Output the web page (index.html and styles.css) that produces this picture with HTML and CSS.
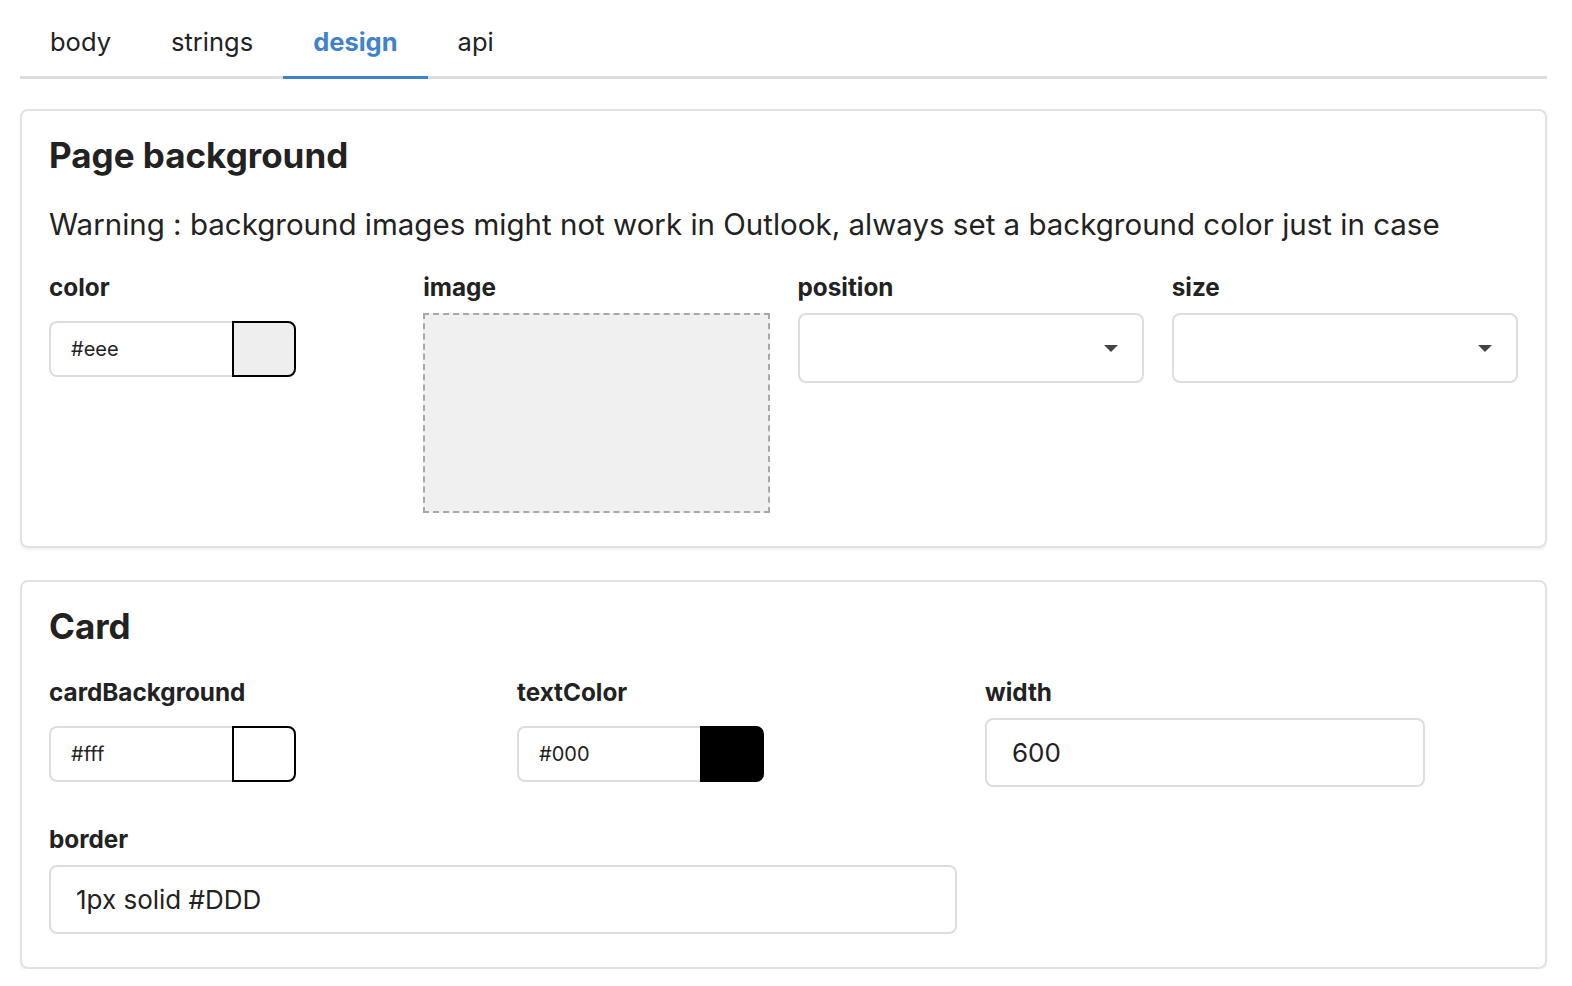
FILE: index.html
```html
<!DOCTYPE html>
<html lang="en">
<head>
<meta charset="utf-8">
<title>Design</title>
<link rel="stylesheet" href="styles.css">
</head>
<body>
<div class="page">
  <nav class="tabs">
    <div class="tab">body</div>
    <div class="tab">strings</div>
    <div class="tab active">design</div>
    <div class="tab">api</div>
  </nav>

  <section class="card">
    <h2 class="card-title">Page background</h2>
    <p class="warning">Warning : background images might not work in Outlook, always set a background color just in case</p>
    <div class="grid grid-4">
      <div class="field">
        <label class="label">color</label>
        <div class="color-input">
          <div class="color-text">#eee</div>
          <div class="swatch swatch-eee"></div>
        </div>
      </div>
      <div class="field">
        <label class="label">image</label>
        <div class="image-drop"></div>
      </div>
      <div class="field">
        <label class="label">position</label>
        <div class="select"><span class="caret"></span></div>
      </div>
      <div class="field">
        <label class="label">size</label>
        <div class="select"><span class="caret"></span></div>
      </div>
    </div>
  </section>

  <section class="card">
    <h2 class="card-title card-title-tight">Card</h2>
    <div class="grid grid-3">
      <div class="field">
        <label class="label">cardBackground</label>
        <div class="color-input">
          <div class="color-text">#fff</div>
          <div class="swatch swatch-fff"></div>
        </div>
      </div>
      <div class="field">
        <label class="label">textColor</label>
        <div class="color-input">
          <div class="color-text">#000</div>
          <div class="swatch swatch-000"></div>
        </div>
      </div>
      <div class="field">
        <label class="label">width</label>
        <div class="text-input">600</div>
      </div>
      <div class="field span-2">
        <label class="label">border</label>
        <div class="text-input">1px solid #DDD</div>
      </div>
    </div>
  </section>
</div>
</body>
</html>
```

FILE: styles.css
```css
* { box-sizing: border-box; }

html, body {
  margin: 0;
  padding: 0;
  background: #fff;
}

body {
  font-family: Inter, "Noto Sans", "Liberation Sans", sans-serif;
  color: #222;
}

.page {
  padding: 0 25px 0 20px;
}

.tabs {
  display: flex;
  border-bottom: 3px solid #ddd;
}

.tab {
  font-size: 25.5px;
  line-height: 31px;
  padding: 26px 30px 19px;
  border-bottom: 3px solid transparent;
  margin-bottom: -3px;
  color: #222;
}

.tab.active {
  color: #4083cc;
  font-weight: 700;
  border-bottom-color: #4083cc;
}

.card {
  margin-top: 30px;
  border: 2px solid #e2e2e2;
  border-radius: 8px;
  box-shadow: 0 2px 3px rgba(0, 0, 0, 0.06);
  padding: 23px 27px 33px;
}

.card + .card {
  margin-top: 32px;
}

.card-title {
  margin: 0 0 30px;
  font-size: 35px;
  line-height: 42px;
  font-weight: 700;
  color: #222;
}

.card-title-tight {
  margin-bottom: 31px;
}

.warning {
  margin: 0 0 31px;
  font-size: 29.5px;
  line-height: 36px;
}

.grid {
  display: grid;
}

.grid-4 {
  grid-template-columns: repeat(4, 1fr);
  column-gap: 28px;
}

.grid-3 {
  grid-template-columns: repeat(3, 440px);
  column-gap: 28px;
  row-gap: 38px;
}

.span-2 {
  grid-column: span 2;
}

.field {
  display: flex;
  flex-direction: column;
  align-items: flex-start;
}

.label {
  display: block;
  font-size: 24.3px;
  line-height: 29px;
  font-weight: 700;
  margin-bottom: 11px;
}

.color-input {
  display: flex;
  margin-top: 8px;
  height: 56px;
}

.color-text {
  width: 183px;
  height: 56px;
  border: 2px solid #ddd;
  border-right: none;
  border-radius: 8px 0 0 8px;
  font-size: 20px;
  line-height: 52px;
  padding-left: 20px;
}

.swatch {
  width: 64px;
  height: 56px;
  border: 2px solid #000;
  border-radius: 0 8px 8px 0;
}

.swatch-eee { background: #eee; }
.swatch-fff { background: #fff; }
.swatch-000 { background: #000; }

.image-drop {
  width: 100%;
  height: 200px;
  border: 2px dashed #a8a8a8;
  background: #f0f0f0;
}

.select {
  position: relative;
  width: 100%;
  height: 70px;
  border: 2px solid #ddd;
  border-radius: 8px;
}

.caret {
  position: absolute;
  right: 24px;
  top: 30px;
  width: 0;
  height: 0;
  border-left: 7px solid transparent;
  border-right: 7px solid transparent;
  border-top: 7px solid #444;
}

.text-input {
  width: 100%;
  height: 69px;
  border: 2px solid #ddd;
  border-radius: 8px;
  font-size: 26px;
  line-height: 65px;
  padding-left: 25px;
}
```
